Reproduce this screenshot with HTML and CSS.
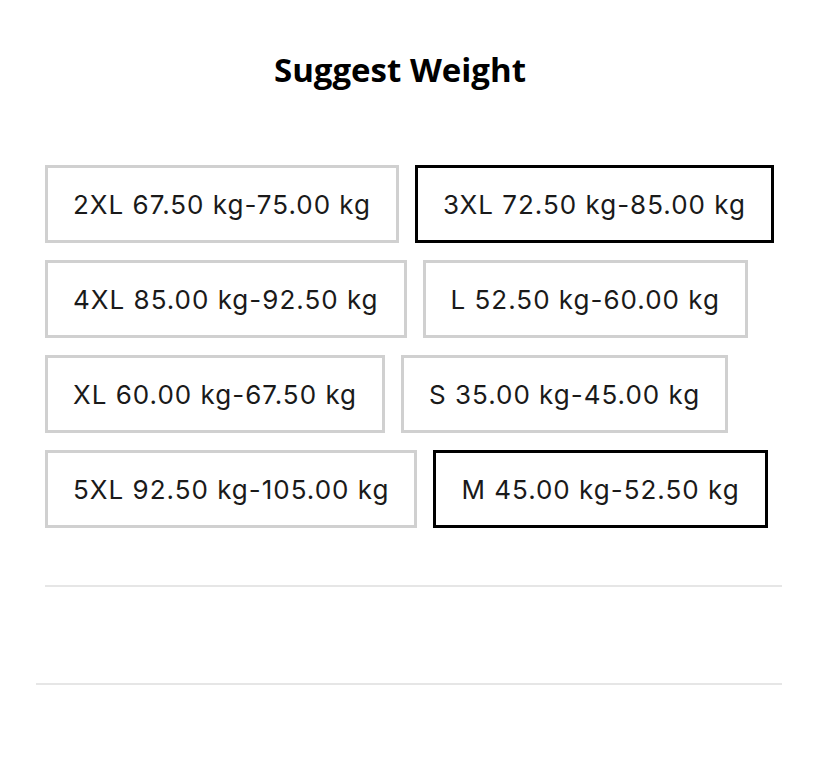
FILE: index.html
```html
<!DOCTYPE html>
<html>
<head>
<meta charset="utf-8">
<link rel="stylesheet" href="styles.css">
</head>
<body>
<div class="page">
  <h1 class="title">Suggest Weight</h1>
  <div class="options">
    <button class="opt">2XL 67.50 kg-75.00 kg</button>
    <button class="opt opt-active">3XL 72.50 kg-85.00 kg</button>
    <button class="opt">4XL 85.00 kg-92.50 kg</button>
    <button class="opt">L 52.50 kg-60.00 kg</button>
    <button class="opt">XL 60.00 kg-67.50 kg</button>
    <button class="opt">S 35.00 kg-45.00 kg</button>
    <button class="opt">5XL 92.50 kg-105.00 kg</button>
    <button class="opt opt-active">M 45.00 kg-52.50 kg</button>
  </div>
  <div class="divider divider-inner"></div>
  <div class="divider divider-outer"></div>
</div>
</body>
</html>
```

FILE: styles.css
```css
html, body {
  margin: 0;
  padding: 0;
  background: #ffffff;
}
.page {
  width: 800px;
  padding-top: 49px;
}
.title {
  margin: 0;
  text-align: center;
  font-family: "Open Sans", "Noto Sans", sans-serif;
  font-weight: 700;
  font-size: 33px;
  line-height: 42px;
  color: #000;
}
.options {
  display: flex;
  flex-wrap: wrap;
  column-gap: 16px;
  row-gap: 17px;
  margin: 74px 8px 0 45px;
}
.opt {
  box-sizing: border-box;
  height: 78px;
  padding: 0 25px;
  border: 3px solid #d0d0d0;
  background: #fff;
  font-family: "Inter", sans-serif;
  font-size: 26px;
  letter-spacing: 1px;
  color: #1a1a1a;
  cursor: pointer;
}
.opt-active {
  border-color: #000;
}
.divider {
  height: 2px;
  background: #e6e6e6;
}
.divider-inner {
  margin: 57px 18px 0 45px;
}
.divider-outer {
  margin: 96px 18px 0 36px;
}
```
